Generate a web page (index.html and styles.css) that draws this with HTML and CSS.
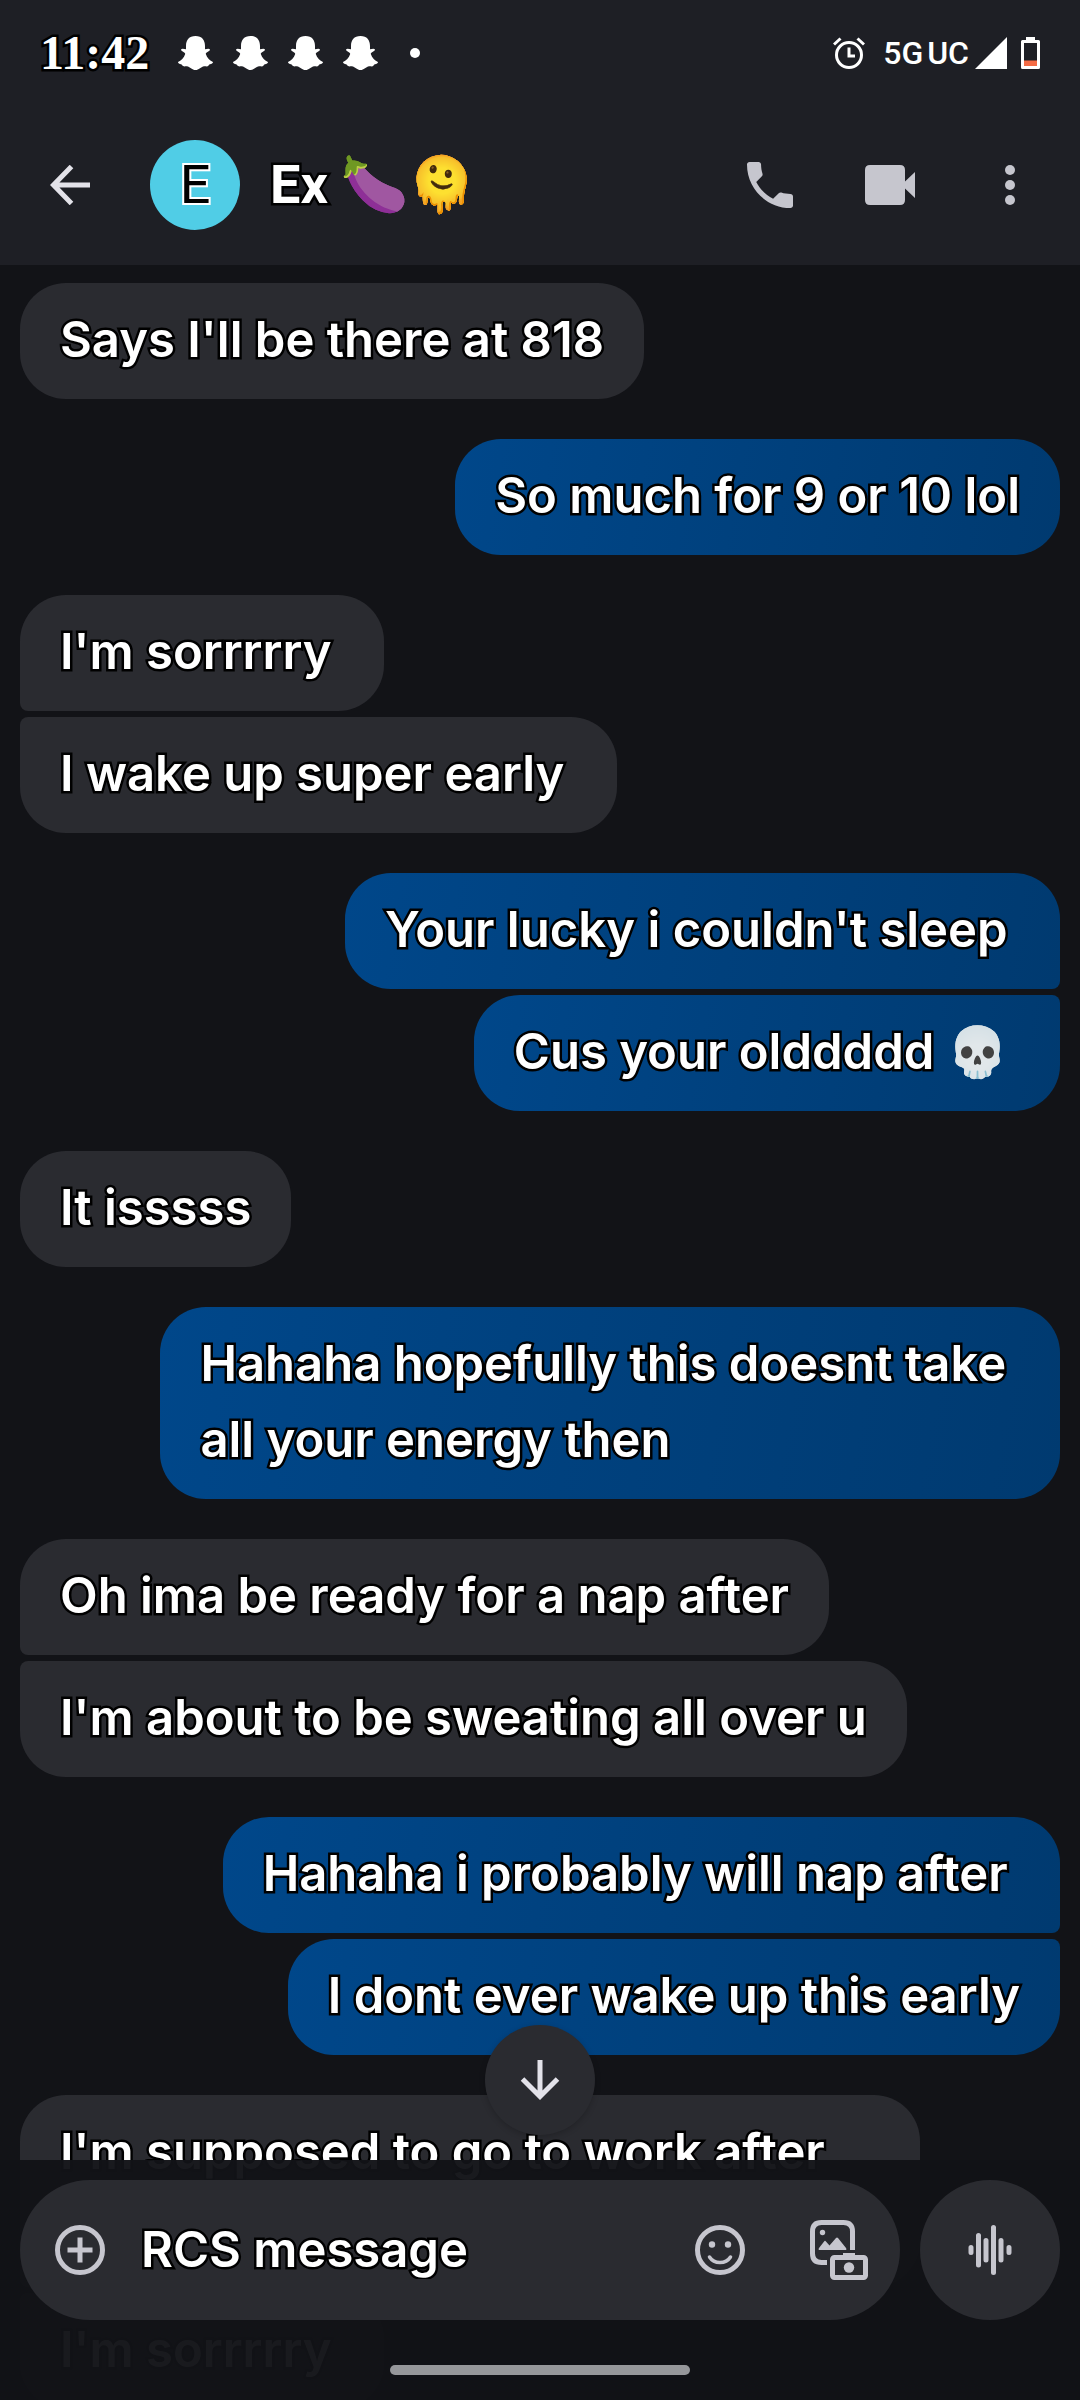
FILE: index.html
```html
<!DOCTYPE html>
<html lang="en">
<head>
<meta charset="utf-8">
<meta name="viewport" content="width=device-width, initial-scale=1">
<title>Ex 🍆🫠</title>
<link rel="stylesheet" href="styles.css">
</head>
<body>
<svg class="defs" aria-hidden="true">
  <symbol id="ghost" viewBox="0 0 35 34">
    <path fill="currentColor" d="M17.500 0C11 0 8 4 8 10v3.200C6 13 4 12 3 13.500c0 1.800 4.200 2.500 4.200 4.500C6 22 3 24.500 0 26c0 2.400 4 1.800 4.500 3.500C5 31 7 30 10 30.500c2.500.8 4 3.500 7.500 3.500s5-2.700 7.500-3.500c3-.5 5 .5 5.500-1 .5-1.700 4.500-1.100 4.500-3.500-3-1.500-6-4-7.200-8 0-2 4.200-2.700 4.200-4.500-1-1.500-3-.5-5-.3V10c0-6-3-10-9.500-10z"/>
  </symbol>
</svg>

<div class="app">
  <header class="top">
    <div class="status">
      <span class="clock outlined">11:42</span>
      <div class="notices">
        <svg class="ghost"><use href="#ghost"/></svg>
        <svg class="ghost"><use href="#ghost"/></svg>
        <svg class="ghost"><use href="#ghost"/></svg>
        <svg class="ghost"><use href="#ghost"/></svg>
        <span class="more-dot"></span>
      </div>
      <div class="signals">
        <svg class="alarm" viewBox="0 0 32 32" fill="none" stroke="currentColor" stroke-width="3">
          <circle cx="16" cy="18" r="12.500"/><path d="M16 10.500V19h6M1 7.500l6.500-6M31 7.500l-6.500-6"/>
        </svg>
        <span class="network">5G<span class="network-band">UC</span></span>
        <svg class="cell" viewBox="0 0 32 32"><path fill="currentColor" d="M32 0v32H0z"/></svg>
        <svg class="battery" viewBox="0 0 19 33">
          <path fill="currentColor" fill-rule="evenodd" d="M5 1h9v3h3.500Q19 4 19 5.500v26q0 1.500-1.500 1.500h-16Q0 33 0 31.500v-26Q0 4 1.500 4H5zM3 7v23h13V7z"/>
          <path fill="#f46b45" d="M3 24.500h13V30H3z"/>
        </svg>
      </div>
    </div>
    <div class="bar">
      <button class="icon-button" type="button" aria-label="Back">
        <svg class="icon-40" viewBox="0 0 40 40" fill="none" stroke="#e3e2e9" stroke-width="5"><path d="M40 20H4M21.500 1.500L3.500 20l18 18.500"/></svg>
      </button>
      <span class="avatar">E</span>
      <h1 class="name outlined">Ex 🍆🫠</h1>
      <div class="actions">
        <button class="icon-button" type="button" aria-label="Call">
          <svg class="icon-46" viewBox="3 3 18 18"><path fill="currentColor" d="M6.620 10.790c1.440 2.830 3.760 5.140 6.590 6.590l2.200-2.200c.27-.27.67-.36 1.020-.24 1.120.37 2.330.57 3.570.57.55 0 1 .45 1 1V20c0 .55-.45 1-1 1-9.390 0-17-7.610-17-17 0-.55.45-1 1-1h3.500c.55 0 1 .45 1 1 0 1.250.2 2.450.57 3.570.11.35.03.74-.25 1.020z"/></svg>
        </button>
        <button class="icon-button" type="button" aria-label="Video call">
          <svg class="video" viewBox="0 0 50 40"><path fill="currentColor" d="M5 0h30q5 0 5 5v11.500L50 7v26l-10-9.500V35q0 5-5 5H5q-5 0-5-5V5q0-5 5-5z"/></svg>
        </button>
        <button class="icon-button" type="button" aria-label="More options">
          <svg class="dots" viewBox="0 0 10 40" fill="currentColor"><circle cx="5" cy="5" r="5"/><circle cx="5" cy="20" r="5"/><circle cx="5" cy="35" r="5"/></svg>
        </button>
      </div>
    </div>
  </header>

  <main class="thread outlined">
    <div class="group in"><p class="msg">Says I'll be there at 818</p></div>
    <div class="group out"><p class="msg">So much for 9 or 10 lol</p></div>
    <div class="group in">
      <p class="msg">I'm sorrrrry </p>
      <p class="msg">I wake up super early </p>
    </div>
    <div class="group out">
      <p class="msg">Your lucky i couldn't sleep </p>
      <p class="msg">Cus your olddddd 💀 </p>
    </div>
    <div class="group in"><p class="msg">It isssss</p></div>
    <div class="group out"><p class="msg">Hahaha hopefully this doesnt take all your energy then</p></div>
    <div class="group in">
      <p class="msg">Oh ima be ready for a nap after</p>
      <p class="msg">I'm about to be sweating all over u</p>
    </div>
    <div class="group out">
      <p class="msg">Hahaha i probably will nap after </p>
      <p class="msg">I dont ever wake up this early</p>
    </div>
    <div class="group in">
      <p class="msg two-line">I'm supposed to go to work after</p>
      <p class="msg">I'm sorrrrry </p>
    </div>
  </main>

  <footer class="dock">
    <button class="jump" type="button" aria-label="Scroll to latest">
      <svg class="icon-40" viewBox="0 0 40 40" fill="none" stroke="#e3e2e9" stroke-width="5"><path d="M20 0v36M2.500 19L20 36.500 37.500 19"/></svg>
    </button>
    <form class="composer">
      <div class="field">
        <button class="icon-button" type="button" aria-label="Add attachment">
          <svg class="icon-50" viewBox="0 0 50 50" fill="none" stroke="currentColor" stroke-width="5"><circle cx="25" cy="25" r="22.500"/><path d="M25 12.500v25M12.500 25h25"/></svg>
        </button>
        <input class="input outlined" type="text" aria-label="Message" placeholder="RCS message">
        <button class="icon-button" type="button" aria-label="Emoji">
          <svg class="icon-50" viewBox="0 0 50 50"><g fill="none" stroke="currentColor"><circle cx="25" cy="25" r="22.500" stroke-width="5"/><path stroke-width="3.500" stroke-linecap="round" d="M14.500 32Q18 37.500 25 37.500T35.500 32"/></g><circle cx="17" cy="19.500" r="3.200" fill="currentColor"/><circle cx="33" cy="19.500" r="3.200" fill="currentColor"/></svg>
        </button>
        <button class="icon-button" type="button" aria-label="Gallery">
          <svg class="icon-60" viewBox="0 0 60 60">
            <g fill="none" stroke="currentColor" stroke-width="5">
              <path d="M42.500 30V11.500q0-9-9-9h-22q-9 0-9 9v22q0 9 9 9H17"/>
              <rect x="22.500" y="37.500" width="33" height="20" rx="2"/>
            </g>
            <g fill="currentColor"><circle cx="12.500" cy="12.500" r="2.700"/><path d="M9 30q-1-.5 0-2l5.500-7q.5-.5 1 0l4 4.500 6.500-7.500q1-1 2 0l8 10q1 1.500 0 2zM33 33h12v4H33z"/><circle cx="39" cy="47.500" r="5.200"/></g>
          </svg>
        </button>
      </div>
      <button class="voice" type="button" aria-label="Record voice message">
        <svg class="wave" viewBox="0 0 44 50" fill="none" stroke="currentColor" stroke-width="5" stroke-linecap="round"><path d="M3 22.500v5M10.500 10.500v29.500M18 15.500v19.500M25.500 2.500v45M33 15.500v19.500M41 22.500v5"/></svg>
      </button>
    </form>
    <div class="handle"></div>
  </footer>
</div>
</body>
</html>
```
FILE: styles.css
```css
* { box-sizing: border-box; }

body {
  margin: 0;
  background: #121317;
  color: #fff;
  font-family: Inter, Roboto, sans-serif;
}

h1, p { margin: 0; font: inherit; }
svg { display: block; flex: none; }

button {
  border: 0;
  padding: 0;
  background: none;
  color: #c6c6ce;
}

.defs { position: absolute; width: 0; height: 0; }

.outlined {
  -webkit-text-stroke: 5px #000;
  paint-order: stroke fill;
  stroke-linejoin: round;
}

.app {
  position: relative;
  height: 100vh;
  overflow: hidden;
}

/* Top of screen */
.top { background: #1e1f25; }

.status {
  display: flex;
  align-items: center;
  height: 105px;
  padding: 0 40px;
}

.clock {
  width: 138px;
  font: 700 48px "Liberation Serif", serif;
}

.notices { display: flex; align-items: center; gap: 20px; }
.ghost { width: 35px; height: 34px; }
.more-dot { width: 10px; height: 10px; margin-left: 12px; border-radius: 50%; background: #fff; }

.signals { display: flex; align-items: center; margin-left: auto; }
.alarm { width: 32px; height: 32px; margin-right: 18px; }
.network { display: flex; gap: 4px; margin-right: 6px; font: 500 32px Roboto, sans-serif; }
.cell { width: 32px; height: 32px; margin-right: 14px; }
.battery { width: 19px; height: 33px; }

.bar {
  display: flex;
  align-items: center;
  height: 160px;
  padding: 0 10px 0 50px;
}

.icon-button { display: grid; place-items: center; flex: none; }
.icon-40 { width: 40px; height: 40px; }
.icon-46 { width: 46px; height: 46px; }
.icon-50 { width: 50px; height: 50px; }
.icon-60 { width: 60px; height: 60px; }
.video { width: 50px; height: 40px; }
.dots { width: 10px; height: 40px; }

.avatar {
  display: grid;
  place-items: center;
  width: 90px;
  height: 90px;
  margin: 0 30px 0 60px;
  border-radius: 50%;
  background: #50cde6;
  color: #000;
  font: 400 54px/88px Roboto, sans-serif;
  -webkit-text-stroke: 4px #fff;
  paint-order: stroke fill;
}

.name { font: 700 54px/72px Roboto, sans-serif; }

.actions { display: flex; margin-left: auto; }
.actions .icon-button { width: 120px; height: 80px; }

/* Conversation */
.thread {
  display: flex;
  flex-direction: column;
  gap: 40px;
  padding: 18px 20px 0;
  font-size: 49px;
  font-weight: 600;
  line-height: 76px;
}

.group { display: flex; flex-direction: column; gap: 6px; }
.in { align-items: flex-start; }
.out { align-items: flex-end; }

.msg {
  max-width: 86.5%;
  padding: 19px 40px 21px;
  border-radius: 46px;
  background: #2a2b30;
  white-space: break-spaces;
}

.out .msg { background: linear-gradient(100deg, #00478a, #003a70); }

.in .msg:not(:last-child) { border-bottom-left-radius: 8px; }
.in .msg:not(:first-child) { border-top-left-radius: 8px; }
.out .msg:not(:last-child) { border-bottom-right-radius: 8px; }
.out .msg:not(:first-child) { border-top-right-radius: 8px; }

.two-line { width: 100%; min-height: 192px; }

/* Composer, drawn over the end of the conversation */
.dock {
  position: absolute;
  right: 0;
  bottom: 0;
  left: 0;
  padding: 20px 20px 25px;
  background: rgba(18, 19, 23, .97);
}

.jump {
  position: absolute;
  bottom: 265px;
  left: 50%;
  display: grid;
  place-items: center;
  width: 110px;
  height: 110px;
  margin-left: -55px;
  border-radius: 50%;
  background: #2a2b30;
  box-shadow: 0 2px 6px rgba(0, 0, 0, .2);
}

.composer { display: flex; gap: 20px; }

.field {
  display: flex;
  flex: 1;
  align-items: center;
  gap: 65px;
  min-width: 0;
  height: 140px;
  padding: 0 30px 0 35px;
  border-radius: 70px;
  background: #2a2b30;
}

.input {
  flex: 1;
  min-width: 0;
  margin-left: -33px;
  padding: 0 0 0 4px;
  border: 0;
  outline: 0;
  background: none;
  color: #fff;
  font: 600 49px/76px Inter, sans-serif;
}

.input::placeholder { color: #fff; opacity: 1; }

.voice {
  display: grid;
  place-items: center;
  width: 140px;
  height: 140px;
  border-radius: 50%;
  background: #2a2b30;
}

.wave { width: 44px; height: 50px; }

.handle {
  width: 300px;
  height: 10px;
  margin: 45px auto 0;
  border-radius: 5px;
  background: #96979a;
}
```
